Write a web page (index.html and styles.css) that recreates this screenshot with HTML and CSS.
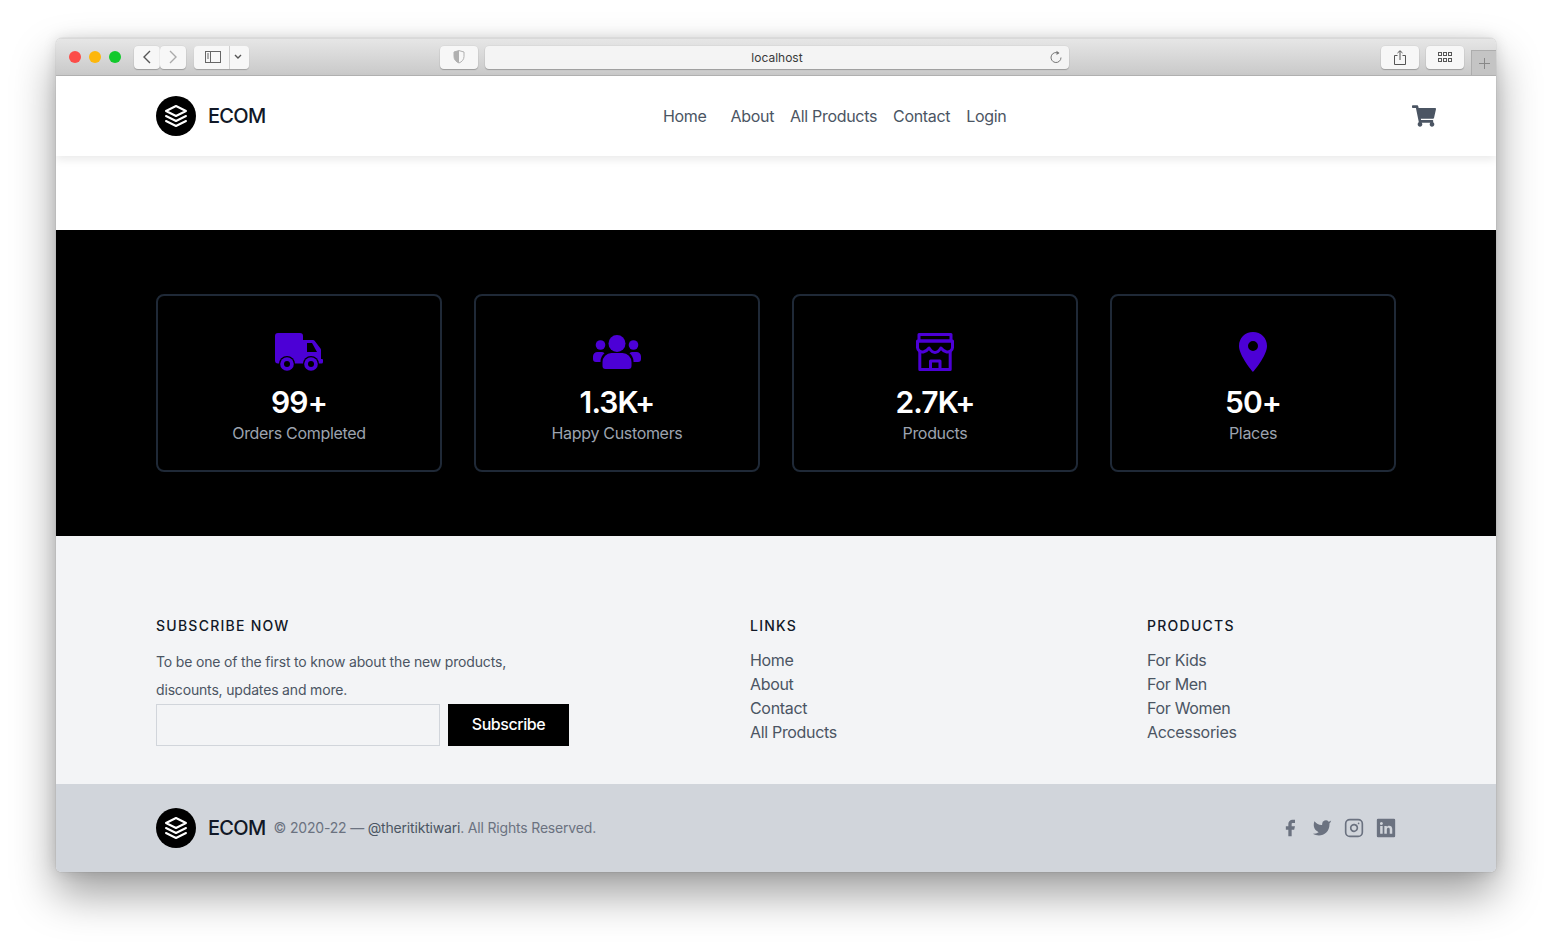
FILE: index.html
```html
<!DOCTYPE html>
<html lang="en">

<head>
    <meta charset="UTF-8">
    <meta name="viewport" content="width=device-width, initial-scale=1.0">
    <title>ECOM</title>
    <link rel="stylesheet" href="styles.css">
</head>

<body>
    <div class="window">
        <!-- browser chrome -->
        <div class="toolbar">
            <div class="lights">
                <span class="light light-red"></span>
                <span class="light light-yellow"></span>
                <span class="light light-green"></span>
            </div>
            <div class="tool-group tool-nav">
                <button class="tool tool-back" aria-label="Back">
                    <svg width="10" height="14" viewBox="0 0 10 14" fill="none" stroke="#555" stroke-width="1.4"><path d="M8 1 2 7l6 6"/></svg>
                </button>
                <button class="tool tool-back" aria-label="Forward">
                    <svg width="10" height="14" viewBox="0 0 10 14" fill="none" stroke="#aaa" stroke-width="1.4"><path d="m2 1 6 6-6 6"/></svg>
                </button>
            </div>
            <div class="tool-group tool-side">
                <button class="tool tool-sidebar" aria-label="Sidebar">
                    <svg width="16" height="12" viewBox="0 0 16 12" fill="none" stroke="#666"><rect x=".5" y=".5" width="15" height="11"/><path d="M5.5 .5v11M2 3h2M2 5h2M2 7h2"/></svg>
                </button>
                <button class="tool tool-caret" aria-label="Sidebar menu">
                    <svg width="8" height="6" viewBox="0 0 8 6" fill="none" stroke="#555" stroke-width="1.4"><path d="m1 1 3 3 3-3"/></svg>
                </button>
            </div>
            <button class="tool tool-wide tool-shield" aria-label="Privacy">
                <svg width="12" height="14" viewBox="0 0 12 14"><path d="M6 .6 1 2v4.500c0 3.200 2.200 5.300 5 6.500 2.800-1.200 5-3.300 5-6.500V2z" fill="#f7f7f7" stroke="#b0b0b0"/><path d="M6 .6 1 2v4.500c0 3.200 2.200 5.300 5 6.500z" fill="#b0b0b0"/></svg>
            </button>
            <div class="address">
                <span>localhost</span>
                <svg class="reload" width="12" height="14" viewBox="0 0 12 14" fill="none" stroke="#777"><path d="M8.500 3.200a5 5 0 1 0 2.500 4.300"/><path d="M6.500 0.800 9.500 3 6.500 5z" fill="#777" stroke="none"/></svg>
            </div>
            <button class="tool tool-wide tool-share" aria-label="Share">
                <svg width="12" height="15" viewBox="0 0 12 15" fill="none" stroke="#555"><path d="M3.500 5.500h-3v9h11v-9h-3M6 10V1M3.500 3 6 .7 8.500 3"/></svg>
            </button>
            <button class="tool tool-wide tool-tabs" aria-label="Tabs">
                <svg width="14" height="10" viewBox="0 0 14 10" fill="none" stroke="#555"><rect x=".5" y=".5" width="3" height="3"/><rect x="5.500" y=".5" width="3" height="3"/><rect x="10.500" y=".5" width="3" height="3"/><rect x=".5" y="6.500" width="3" height="3"/><rect x="5.500" y="6.500" width="3" height="3"/><rect x="10.500" y="6.500" width="3" height="3"/></svg>
            </button>
            <div class="new-tab">
                <svg width="11" height="11" viewBox="0 0 11 11" stroke="#888"><path d="M5.500 0v11M0 5.500h11"/></svg>
            </div>
        </div>

        <header class="site-header">
            <a class="brand" href="#">
                <span class="brand-mark">
                    <svg viewBox="0 0 24 24" fill="none" stroke="#fff" stroke-width="2" stroke-linecap="round" stroke-linejoin="round"><path d="M12 2 2 7l10 5 10-5-10-5zM2 17l10 5 10-5M2 12l10 5 10-5"/></svg>
                </span>
                <span class="brand-name">ECOM</span>
            </a>
            <nav class="main-nav">
                <a class="nav-home" href="#">Home</a>
                <a href="#">About</a>
                <a href="#">All Products</a>
                <a href="#">Contact</a>
                <a href="#">Login</a>
            </nav>
            <a class="cart" href="#" aria-label="Cart">
                <svg width="24" height="22" viewBox="0 0 576 512" fill="#4b5563"><path d="M528.120 301.319l47.273-208C578.806 78.301 567.391 64 551.990 64H159.208l-9.166-44.810C147.758 8.021 137.930 0 126.529 0H24C10.745 0 0 10.745 0 24v16c0 13.255 10.745 24 24 24h69.883l70.248 343.435C147.325 417.100 136 435.222 136 456c0 30.928 25.072 56 56 56s56-25.072 56-56c0-15.674-6.447-29.835-16.824-40h209.647C430.447 426.165 424 440.326 424 456c0 30.928 25.072 56 56 56s56-25.072 56-56c0-22.172-12.888-41.332-31.579-50.405l5.517-24.276c3.413-15.018-8.002-29.319-23.403-29.319H218.117l-6.545-32h293.145c11.206 0 20.920-7.754 23.403-18.681z"/></svg>
            </a>
        </header>

        <div class="spacer"></div>

        <section class="stats">
            <div class="stat-card">
                <svg class="stat-icon" viewBox="0 0 48 48" fill="#4c00d6">
                    <path d="M3 5h22a3 3 0 0 1 3 3v4h10a2 2 0 0 1 1.600.8L45.500 20.500a2 2 0 0 1 .5 1.400V31h1a1 1 0 0 1 1 1v2a1.500 1.500 0 0 1-1.500 1.500H3a3 3 0 0 1-3-3V8a3 3 0 0 1 3-3z"/>
                    <path d="M32 15h5l5 9h-10z" fill="#000"/>
                    <circle cx="12" cy="36" r="8" fill="#000"/>
                    <circle cx="36" cy="36" r="8" fill="#000"/>
                    <circle cx="12" cy="36" r="6.800"/>
                    <circle cx="36" cy="36" r="6.800"/>
                    <circle cx="12" cy="36" r="3" fill="#000"/>
                    <circle cx="36" cy="36" r="3" fill="#000"/>
                </svg>
                <h2>99+</h2>
                <p>Orders Completed</p>
            </div>
            <div class="stat-card">
                <svg class="stat-icon" viewBox="0 0 48 48" fill="#4c00d6">
                    <circle cx="24" cy="15.500" r="8.500"/>
                    <circle cx="7.500" cy="17" r="4.800"/>
                    <circle cx="40.500" cy="17" r="4.800"/>
                    <path d="M9.500 38v-4a9 9 0 0 1 9-9h11a9 9 0 0 1 9 9v4a3 3 0 0 1-3 3h-23a3 3 0 0 1-3-3z"/>
                    <path d="M0 31v-2.500A4.500 4.500 0 0 1 4.500 24h4a4 4 0 0 1 3 1.300A11 11 0 0 0 7.500 33v1H3a3 3 0 0 1-3-3z"/>
                    <path d="M48 31v-2.500a4.500 4.500 0 0 0-4.500-4.500h-4a4 4 0 0 0-3 1.300 11 11 0 0 1 4 7.700v1H45a3 3 0 0 0 3-3z"/>
                </svg>
                <h2>1.3K+</h2>
                <p>Happy Customers</p>
            </div>
            <div class="stat-card">
                <svg class="stat-icon" viewBox="0 0 48 48" fill="none" stroke="#4c00d6" stroke-width="3" stroke-linejoin="round">
                    <path d="M8 6.500h32V13H8z"/>
                    <path d="M6.500 13h35v6.500a5 5 0 0 1-5.800 4.500q-3-.5-5.800-4-3 4.500-5.900 4.500t-5.900-4.500q-2.800 3.500-5.800 4a5 5 0 0 1-5.800-4.500z"/>
                    <path d="M8.800 24v17.500h30.400V24"/>
                    <path d="M19.500 41.500V33h9.500v8.500"/>
                </svg>
                <h2>2.7K+</h2>
                <p>Products</p>
            </div>
            <div class="stat-card">
                <svg class="stat-icon" viewBox="0 0 48 48">
                    <path fill="#4c00d6" fill-rule="evenodd" d="M24 4c-8 0-14 6-14 14 0 10 14 26 14 26s14-16 14-26c0-8-6-14-14-14zm0 9a5 5 0 1 1 0 10 5 5 0 0 1 0-10z"/>
                </svg>
                <h2>50+</h2>
                <p>Places</p>
            </div>
        </section>

        <footer>
            <div class="footer-main">
                <div class="footer-col">
                    <h3>SUBSCRIBE NOW</h3>
                    <p class="subscribe-text">To be one of the first to know about the new products,<br>discounts, updates and more.</p>
                    <form class="subscribe-form">
                        <input type="email" aria-label="Email">
                        <button type="button">Subscribe</button>
                    </form>
                </div>
                <div class="footer-col">
                    <h3>LINKS</h3>
                    <ul>
                        <li><a href="#">Home</a></li>
                        <li><a href="#">About</a></li>
                        <li><a href="#">Contact</a></li>
                        <li><a href="#">All Products</a></li>
                    </ul>
                </div>
                <div class="footer-col">
                    <h3>PRODUCTS</h3>
                    <ul>
                        <li><a href="#">For Kids</a></li>
                        <li><a href="#">For Men</a></li>
                        <li><a href="#">For Women</a></li>
                        <li><a href="#">Accessories</a></li>
                    </ul>
                </div>
            </div>
            <div class="footer-bottom">
                <a class="brand" href="#">
                    <span class="brand-mark">
                        <svg viewBox="0 0 24 24" fill="none" stroke="#fff" stroke-width="2" stroke-linecap="round" stroke-linejoin="round"><path d="M12 2 2 7l10 5 10-5-10-5zM2 17l10 5 10-5M2 12l10 5 10-5"/></svg>
                    </span>
                    <span class="brand-name">ECOM</span>
                </a>
                <p class="copyright">© 2020-22 — <a href="#">@theritiktiwari</a>. All Rights Reserved.</p>
                <div class="socials">
                    <a href="#" aria-label="Facebook">
                        <svg viewBox="0 0 24 24" fill="#6b7280"><path d="M18 2h-3a5 5 0 0 0-5 5v3H7v4h3v8h4v-8h3l1-4h-4V7a1 1 0 0 1 1-1h3z"/></svg>
                    </a>
                    <a href="#" aria-label="Twitter">
                        <svg viewBox="0 0 24 24" fill="#6b7280"><path d="M23 3a10.900 10.900 0 0 1-3 1.370 4.480 4.480 0 0 0-7.860 3v1A10.660 10.660 0 0 1 3 4s-4 9 5 13a11.640 11.640 0 0 1-7 2c9 5 20 0 20-11.500a4.500 4.500 0 0 0-.08-.83A7.720 7.720 0 0 0 23 3z"/></svg>
                    </a>
                    <a href="#" aria-label="Instagram">
                        <svg viewBox="0 0 24 24" fill="none" stroke="#6b7280" stroke-width="2" stroke-linecap="round" stroke-linejoin="round"><rect x="2" y="2" width="20" height="20" rx="5"/><path d="M16 11.370A4 4 0 1 1 12.630 8 4 4 0 0 1 16 11.370zm1.500-4.870h.01"/></svg>
                    </a>
                    <a href="#" aria-label="LinkedIn">
                        <svg viewBox="0 0 24 24"><path fill="#6b7280" fill-rule="evenodd" d="M2.500 1h19A1.500 1.500 0 0 1 23 2.500v19a1.500 1.500 0 0 1-1.500 1.500h-19A1.500 1.500 0 0 1 1 21.500v-19A1.500 1.500 0 0 1 2.500 1zM5 9.500V19h3V9.500zM6.500 4.800a1.800 1.800 0 1 0 0 3.600 1.800 1.800 0 0 0 0-3.600zM10 9.500V19h3v-5c0-1.400.7-2.200 1.800-2.200s1.700.8 1.700 2.200v5h3v-5.700c0-2.600-1.500-4-3.600-4-1.300 0-2.300.6-2.900 1.500V9.500z"/></svg>
                    </a>
                </div>
            </div>
        </footer>
    </div>
</body>

</html>
```

FILE: styles.css
```css
* {
    box-sizing: border-box;
}

html,
body {
    height: 100%;
}

body {
    margin: 0;
    padding: 38px 56px 0;
    background-color: #ffffff;
    font-family: 'Inter', sans-serif;
    color: #4b5563;
    overflow: hidden;
}

a {
    color: inherit;
    text-decoration: none;
}

.window {
    height: 834px;
    border-radius: 6px 6px 5px 5px;
    overflow: hidden;
    background-color: #ffffff;
    box-shadow: 0 22px 44px rgba(0, 0, 0, 0.38), 0 0 14px rgba(0, 0, 0, 0.12), 0 0 1px rgba(0, 0, 0, 0.4);
}

/* browser chrome */
.toolbar {
    display: flex;
    align-items: center;
    height: 38px;
    padding-left: 13px;
    background: linear-gradient(#e6e6e6, #c9c9c9);
    border-top: 1px solid #d9d9d9;
    border-bottom: 1px solid #b2b2b2;
}

.lights {
    display: flex;
    gap: 8px;
    margin-right: 13px;
}

.light {
    width: 12px;
    height: 12px;
    border-radius: 50%;
}

.light-red {
    background-color: #fc4c48;
}

.light-yellow {
    background-color: #fdb70c;
}

.light-green {
    background-color: #12c92c;
}

.tool-group {
    display: flex;
}

.tool {
    display: flex;
    align-items: center;
    justify-content: center;
    height: 23px;
    padding: 0;
    background-color: #f7f7f7;
    border: none;
    border-radius: 4px;
    box-shadow: 0 1px 1px rgba(0, 0, 0, 0.22), 0 0 0 0.5px rgba(0, 0, 0, 0.06);
}

.tool-back {
    width: 26px;
}

.tool-side {
    margin-left: 8px;
    border-radius: 4px;
    box-shadow: 0 1px 1px rgba(0, 0, 0, 0.22);
}

.tool-sidebar {
    width: 36px;
    padding-left: 2px;
    border-radius: 4px 0 0 4px;
    border-right: 1px solid #d0d0d0;
    box-shadow: none;
}

.tool-caret {
    width: 19px;
    padding-right: 3px;
    border-radius: 0 4px 4px 0;
    box-shadow: none;
}

.tool-wide {
    width: 38px;
}

.tool-shield {
    margin-left: 191px;
}

.address {
    position: relative;
    display: flex;
    align-items: center;
    justify-content: center;
    width: 584px;
    height: 23px;
    margin-left: 7px;
    background-color: #f4f4f4;
    border-radius: 4px;
    box-shadow: 0 1px 1px rgba(0, 0, 0, 0.22), 0 0 0 0.5px rgba(0, 0, 0, 0.06);
    font-size: 12px;
    color: #3a3a3a;
}

.reload {
    position: absolute;
    right: 7px;
    top: 4px;
}

.tool-share {
    margin-left: 312px;
}

.tool-tabs {
    margin-left: 7px;
}

.new-tab {
    display: flex;
    align-items: center;
    justify-content: center;
    align-self: flex-end;
    width: 25px;
    height: 25px;
    margin-left: 7px;
    background-color: #c4c4c4;
    border-left: 1px solid #adadad;
    border-top: 1px solid #adadad;
}

/* header */
.site-header {
    display: grid;
    grid-template-columns: 507px 1fr auto;
    align-items: center;
    height: 80px;
    padding: 0 60px 0 100px;
    box-shadow: 0 4px 8px rgba(0, 0, 0, 0.08);
    position: relative;
}

.brand {
    display: flex;
    align-items: center;
    gap: 12px;
}

.brand-mark {
    display: flex;
    width: 40px;
    height: 40px;
    padding: 8px;
    background-color: #000000;
    border-radius: 50%;
}

.brand-name {
    font-size: 20px;
    font-weight: 500;
    letter-spacing: -0.035em;
    color: #111827;
}

.main-nav {
    display: flex;
    gap: 16px;
    font-size: 16px;
    letter-spacing: -0.02em;
}

.nav-home {
    margin-right: 8px;
}

.cart {
    display: flex;
}

.spacer {
    height: 74px;
}

/* stats */
.stats {
    display: grid;
    grid-template-columns: repeat(4, 1fr);
    gap: 32px;
    padding: 64px 100px;
    background-color: #000000;
}

.stat-card {
    height: 178px;
    padding-top: 32px;
    border: 2px solid #1f2937;
    border-radius: 8px;
    text-align: center;
}

.stat-icon {
    display: block;
    width: 48px;
    height: 48px;
    margin: 0 auto 8px;
}

.stat-card h2 {
    margin: 0;
    font-size: 30px;
    line-height: 36px;
    font-weight: 600;
    letter-spacing: -0.03em;
    color: #ffffff;
}

.stat-card p {
    margin: 0;
    font-size: 16px;
    line-height: 26px;
    letter-spacing: -0.02em;
    color: #9ca3af;
}

/* footer */
.footer-main {
    display: grid;
    grid-template-columns: 594px 397px 1fr;
    height: 248px;
    padding: 80px 100px 0;
    background-color: #f3f4f6;
}

.footer-col h3 {
    margin: 0 0 12px;
    font-size: 14px;
    line-height: 20px;
    font-weight: 500;
    letter-spacing: 1.25px;
    color: #111827;
}

.footer-col ul {
    margin: 0;
    padding: 0;
    list-style: none;
    font-size: 16px;
    line-height: 24px;
    letter-spacing: -0.02em;
}

.subscribe-text {
    margin: 0;
    font-size: 14px;
    line-height: 28px;
    letter-spacing: -0.012em;
}

.subscribe-form {
    display: flex;
    gap: 8px;
}

.subscribe-form input {
    width: 284px;
    height: 42px;
    background-color: #f3f4f6;
    border: 1px solid #d1d5db;
}

.subscribe-form button {
    width: 121px;
    height: 42px;
    padding: 0 0 2px;
    background-color: #000000;
    border: none;
    color: #ffffff;
    font-family: inherit;
    font-size: 16px;
    font-weight: 500;
    letter-spacing: -0.028em;
}

.footer-bottom {
    display: flex;
    align-items: center;
    height: 88px;
    padding: 0 100px;
    background-color: #d1d5db;
}

.copyright {
    margin: 0 0 2px 8px;
    font-size: 14px;
    letter-spacing: -0.013em;
    color: #6b7280;
}

.copyright a {
    color: #4b5563;
}

.socials {
    display: flex;
    gap: 12px;
    margin-left: auto;
}

.socials a {
    display: flex;
    width: 20px;
    height: 20px;
}
```
